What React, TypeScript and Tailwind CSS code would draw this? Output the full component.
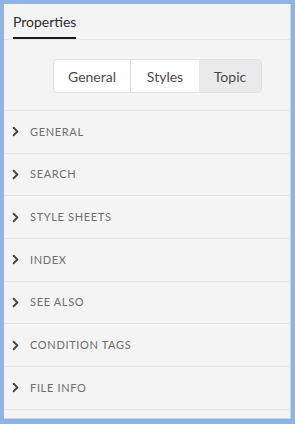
import { ChevronRight } from "lucide-react"

const sections = ["General", "Search", "Style Sheets", "Index", "See Also", "Condition Tags", "File Info"]

export default function App() {
  return (
    <div className="w-[295px] h-[424px] bg-[#8cb4e4] pt-[4px] pl-[4px] pr-[4px] pb-[5px] flex" style={{ fontFamily: "Lato, 'Open Sans', sans-serif" }}>
      <div className="flex-1 flex flex-col bg-[#f4f4f4] border-r border-b border-[#d6d6d6]">
        {/* Tab header */}
        <div className="h-[36px] border-b border-[#e6e6e6] pl-[9px] flex items-stretch">
          <div className="flex items-center border-b-2 border-[#1a1a1a] pt-[2px] text-[14px] text-[#2c2c2c]">Properties</div>
        </div>

        {/* Segmented control */}
        <div className="flex pl-[49px] mt-[19px]">
          <div className="flex h-[34px] rounded-[4px] border border-[#e1e1e1] overflow-hidden text-[14px] text-[#4b4b4b]">
            <div className="w-[77px] flex items-center justify-center bg-white border-r border-[#e1e1e1]">General</div>
            <div className="w-[68px] flex items-center justify-center bg-white">Styles</div>
            <div className="w-[62px] flex items-center justify-center bg-[#eaeaea]">Topic</div>
          </div>
        </div>

        {/* Sections */}
        <div className="mt-[17px] border-t border-[#e6e6e6]">
          {sections.map((s) => (
            <div key={s} className="h-[42.7px] border-b border-[#e6e6e6] flex items-center pl-[4px]">
              <ChevronRight className="w-[15px] h-[15px] text-[#464646]" strokeWidth={3} />
              <span className="ml-[7px] text-[11px] uppercase tracking-[0.06em] text-[#6e6e6e]">{s}</span>
            </div>
          ))}
        </div>
      </div>
    </div>
  )
}
